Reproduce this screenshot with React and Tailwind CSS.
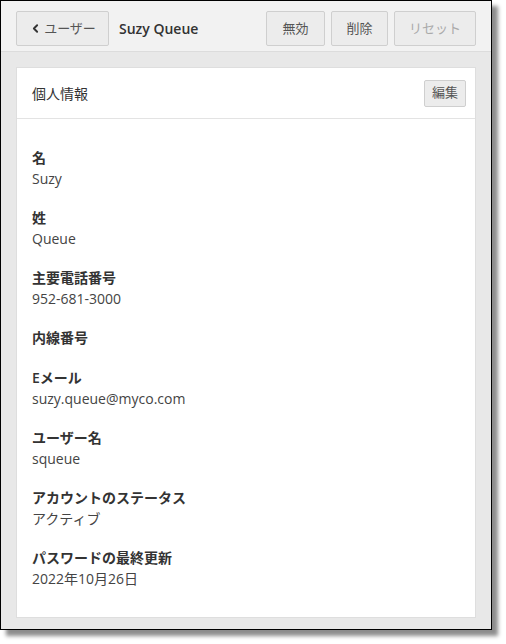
import { ChevronLeft } from 'lucide-react'

const fields = [
  { label: '名', value: 'Suzy' },
  { label: '姓', value: 'Queue' },
  { label: '主要電話番号', value: '952-681-3000' },
  { label: '内線番号', value: '' },
  { label: 'Eメール', value: 'suzy.queue@myco.com' },
  { label: 'ユーザー名', value: 'squeue' },
  { label: 'アカウントのステータス', value: 'アクティブ' },
  { label: 'パスワードの最終更新', value: '2022年10月26日' },
]

const Btn = ({ children, className = '' }) => (
  <button
    className={`h-[35px] rounded-[2px] border border-[#cfcfcf] bg-[#ececec] text-[13px] text-[#555] ${className}`}
  >
    {children}
  </button>
)

export default function App() {
  return (
    <div
      className="w-[506px] h-[644px] bg-white"
      style={{ fontFamily: '"Open Sans", "Noto Sans CJK JP", sans-serif' }}
    >
      <div className="w-[492px] h-[630px] border border-black bg-[#e8e8e8] flex flex-col shadow-[6px_6px_4px_rgba(0,0,0,0.45)]">
        <div className="h-[51px] shrink-0 bg-[#f2f2f2] border-b border-[#dcdcdc] flex items-start pt-[10px] pl-[15px] pr-[15px]">
          <Btn className="w-[93px] flex items-center justify-center gap-[2px]">
            <ChevronLeft size={13} strokeWidth={3.5} className="text-[#333]" />
            <span>ユーザー</span>
          </Btn>
          <div className="ml-[10px] h-[35px] flex items-center text-[14px] font-semibold text-[#333]">
            Suzy Queue
          </div>
          <div className="ml-auto flex gap-[6px]">
            <Btn className="w-[59px]">無効</Btn>
            <Btn className="w-[57px]">削除</Btn>
            <Btn className="w-[82px] text-[#aaa]">リセット</Btn>
          </div>
        </div>

        <div className="flex-1 px-[15px] pt-[15px] pb-[11px]">
          <div className="h-full bg-white border border-[#dedede] flex flex-col">
            <div className="h-[51px] shrink-0 border-b border-[#e3e3e3] flex items-center justify-between pl-[15px] pr-[9px]">
              <span className="text-[14px] text-[#333]">個人情報</span>
              <button className="h-[27px] w-[42px] rounded-[2px] border border-[#cfcfcf] bg-[#ececec] text-[13px] text-[#555]">
                編集
              </button>
            </div>
            <div className="pt-[29px] pl-[15px] flex flex-col gap-[19px] text-[14px] leading-[20px]">
              {fields.map((f) => (
                <div key={f.label} className={f.value ? '' : 'pb-px'}>
                  <div className="font-semibold text-[#333]">{f.label}</div>
                  {f.value && <div className="mt-px text-[#444]">{f.value}</div>}
                </div>
              ))}
            </div>
          </div>
        </div>
      </div>
    </div>
  )
}
